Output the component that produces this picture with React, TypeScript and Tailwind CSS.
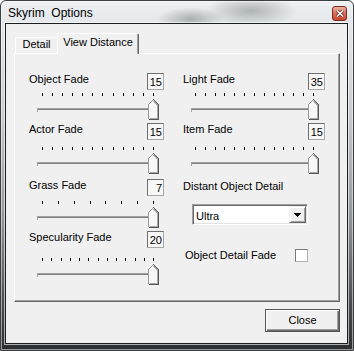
import React from 'react';

const uiFont = "font-['Liberation_Sans',Arial,sans-serif] text-[11px] leading-[13px] text-black";

const ValueBox: React.FC<{ value: string }> = ({ value }) => (
  <div className="w-[17px] h-[17px] border border-[#6e6e6e] border-r-[#a9a9a9] border-b-[#a9a9a9] bg-[#f7f7f7] flex justify-end pt-[2px] pr-[1px]">
    {value}
  </div>
);

const Thumb: React.FC = () => (
  <svg width="11" height="21" viewBox="0 0 11 21" shapeRendering="crispEdges" className="block shrink-0">
    <path d="M0.5 20.5V5.5L5.5 0.5L10.5 5.5V20.5Z" fill="#f7f7f7" />
    <path d="M0.5 20V5.5L5.5 0.5" stroke="#9a9a9a" fill="none" />
    <path d="M5.5 0.5L10.5 5.5V20.5H0.5" stroke="#555555" fill="none" />
    <path d="M5.5 1.9L9.5 5.9V19.5H1.5" stroke="#a8a8a8" fill="none" />
  </svg>
);

type FadeProps = {
  label: string;
  value: string;
  ticks: number;
  tickGap: string;
  wide?: boolean;
};

const FadeSlider: React.FC<FadeProps> = ({ label, value, ticks, tickGap, wide }) => (
  <div className="flex flex-col">
    <div className="flex justify-between items-start h-[17px]">
      <span>{label}</span>
      <ValueBox value={value} />
    </div>
    <div className={`${tickGap} ${wide ? 'ml-[12px] w-[119px]' : 'ml-[13px] w-[112px]'} h-[3px] flex justify-between`}>
      {Array.from({ length: ticks }).map((_, i) => (
        <span key={i} className="w-px h-[3px] bg-black" />
      ))}
    </div>
    <div className="mt-[3px] ml-[8px] flex items-center">
      <div
        className={`${wide ? 'w-[117px]' : 'w-[111px]'} h-[4px] border-t border-l border-[#a0a0a0] border-b-white border-r-white shadow-[inset_0_1px_0_#808080]`}
      />
      <Thumb />
    </div>
  </div>
);

export default function App() {
  return (
    <div className="w-[354px] h-[351px] flex flex-col rounded-t-[6px] border border-[#3a3f44] bg-[radial-gradient(34px_12px_at_190px_18px,#a9aeb1,transparent),radial-gradient(46px_16px_at_250px_10px,#aeb3b6,transparent),linear-gradient(180deg,#eef1f3_0px,#e3e7ea_24px,#c9cdd1_110px,#959a9e_210px,#4b4f53_300px,#2a2d30_351px)] shadow-[inset_0_0_0_1px_rgba(255,255,255,0.5)]">
      <div className="h-[22px] flex items-start justify-between pl-[7px] pr-[6px] pt-[5px]">
        <span className="font-['Liberation_Sans',Arial,sans-serif] text-[12px] leading-[14px] text-black whitespace-pre">
          Skyrim  Options
        </span>
        <div className="w-[15px] h-[15px] rounded-[3px] border border-[#7a2a1e] bg-[linear-gradient(180deg,#eab1a4_0%,#d86e5a_50%,#c7442c_100%)] flex items-center justify-center">
          <svg width="8" height="7" viewBox="0 0 8 7">
            <path d="M1 0.5L7 6.5M7 0.5L1 6.5" stroke="#4a1a12" strokeWidth="3" />
            <path d="M1 0.5L7 6.5M7 0.5L1 6.5" stroke="#ffffff" strokeWidth="1.6" />
          </svg>
        </div>
      </div>

      <div className={`ml-[4px] mr-[5px] h-[321px] border border-[#1b1d1f] shadow-[0_0_0_1px_rgba(255,255,255,0.6)] bg-[#f0f0f0] flex flex-col pl-[8px] pr-[7px] pt-[9px] ${uiFont}`}>
        <div className="h-[20px] flex items-end relative z-10">
          <div className="ml-[1px] w-[42px] h-[16px] border-t border-l border-white rounded-tl-[2px] flex justify-center">
            Detail
          </div>
          <div className="w-[82px] h-[21px] -mb-[1px] bg-[#f0f0f0] border-t border-l border-white border-r border-r-[#696969] shadow-[inset_-1px_0_0_#a0a0a0] rounded-t-[2px] flex justify-center pt-[2px]">
            View Distance
          </div>
        </div>

        <div className="w-[326px] h-[249px] border border-white border-r-[#696969] border-b-[#696969] shadow-[inset_-1px_-1px_0_#a0a0a0] flex pl-[14px] pt-[19px]">
          <div className="w-[135px] flex flex-col">
            <FadeSlider label="Object Fade" value="15" ticks={12} tickGap="mt-[3px]" />
            <div className="mt-[3px]">
              <FadeSlider label="Actor Fade" value="15" ticks={12} tickGap="mt-[7px]" />
            </div>
            <div className="mt-[5px]">
              <FadeSlider label="Grass Fade" value="7" ticks={8} tickGap="mt-[5px]" />
            </div>
            <div className="mt-[3px]">
              <FadeSlider label="Specularity Fade" value="20" ticks={13} tickGap="mt-[10px]" />
            </div>
          </div>

          <div className="ml-[19px] w-[142px] flex flex-col">
            <FadeSlider label="Light Fade" value="35" ticks={13} tickGap="mt-[3px]" wide />
            <div className="mt-[3px]">
              <FadeSlider label="Item Fade" value="15" ticks={13} tickGap="mt-[7px]" wide />
            </div>
            <div className="mt-[6px]">Distant Object Detail</div>
            <div className="mt-[11px] ml-[9px] w-[116px] h-[21px] bg-white border border-[#a0a0a0] border-r-white border-b-white shadow-[inset_1px_1px_0_#696969,inset_-1px_-1px_0_#e3e3e3] flex items-stretch p-[1px]">
              <div className="flex-1 pl-[2px] pt-[4px]">Ultra</div>
              <div className="w-[17px] bg-[#f0f0f0] border border-[#f0f0f0] border-r-[#696969] border-b-[#696969] shadow-[inset_1px_1px_0_#ffffff,inset_-1px_-1px_0_#a0a0a0] flex items-center justify-center">
                <svg width="7" height="4" viewBox="0 0 7 4" shapeRendering="crispEdges">
                  <path d="M0 0H7L3.5 4Z" fill="#000" />
                </svg>
              </div>
            </div>
            <div className="mt-[24px] w-[125px] pl-[2px] h-[13px] flex items-center justify-between">
              <span className="-mt-[1px]">Object Detail Fade</span>
              <div className="w-[13px] h-[13px] bg-white border border-[#7a7a7a] border-r-[#b0b0b0] border-b-[#b0b0b0]" />
            </div>
          </div>
        </div>

        <div className="mt-[7px] flex justify-end">
          <button className="w-[75px] h-[23px] bg-[#f0f0f0] border border-[#555555] shadow-[inset_1px_1px_0_#ffffff,inset_-1px_-1px_0_#696969,inset_-2px_-2px_0_#a0a0a0] flex items-center justify-center">
            Close
          </button>
        </div>
      </div>
    </div>
  );
}
